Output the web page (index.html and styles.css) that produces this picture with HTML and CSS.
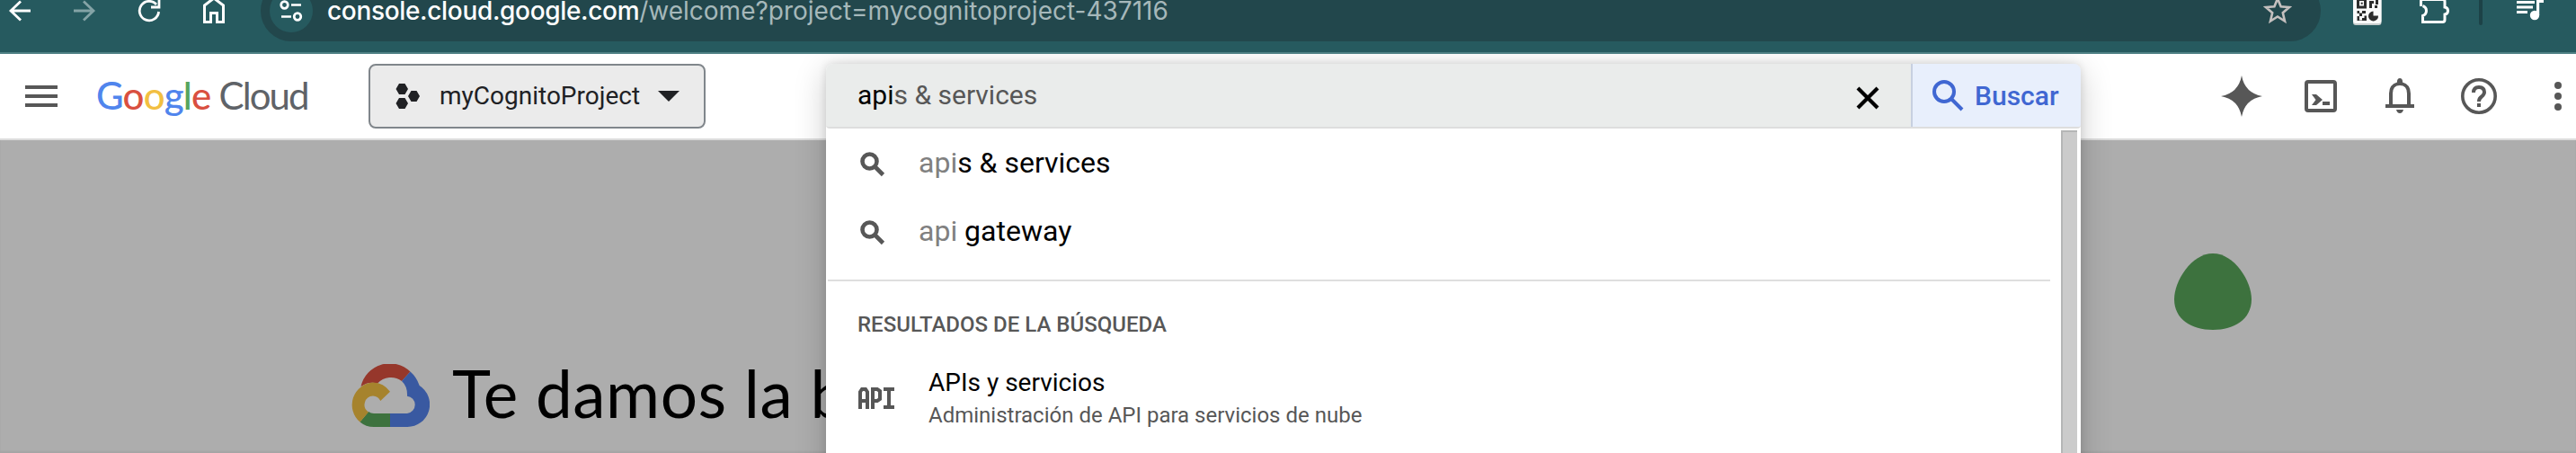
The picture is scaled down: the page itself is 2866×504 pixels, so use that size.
FILE: index.html
```html
<!DOCTYPE html>
<html lang="es">
<head>
<meta charset="utf-8">
<title>Google Cloud</title>
<link rel="stylesheet" href="styles.css">
</head>
<body>
<div class="window">
  <div class="toolbar">
    <svg class="nav" width="290" height="58" viewBox="0 0 290 58" fill="none" stroke="#fff" stroke-width="2.8">
      <path d="M34 12H12M23 1.500L12 12L23 22.500"/>
      <path d="M82 12H104M93 1.500L104 12L93 22.500" stroke="#84a3a6"/>
      <path d="M176.600 13A10.700 10.700 0 1 1 174 5M177 -3V8H168" />
      <path d="M227.500 24.500V6L238 -2L248.500 6V24.500H241.500V14.500H234.500V24.500Z" stroke-width="3"/>
    </svg>
    <div class="omnibox">
      <div class="site-info">
        <svg width="48" height="48" viewBox="0 0 48 48" fill="none" stroke="#fff" stroke-width="2.700"><circle cx="16.500" cy="17.500" r="3.800"/><path d="M24 17.500H35M13 30.500H24"/><circle cx="31" cy="30.500" r="3.800"/></svg>
      </div>
      <div class="url"><span class="host">console.cloud.google.com</span><span class="path">/welcome?project=mycognitoproject-437116</span></div>
      <svg class="star" width="32" height="34" viewBox="0 0 32 34" fill="none" stroke="#c5c0bf" stroke-width="2.600"><path d="M16 3.500L19.600 12.300L29 13L21.800 19.200L24 28.500L16 23.500L8 28.500L10.200 19.200L3 13L12.400 12.300Z"/></svg>
    </div>
    <svg class="tools" width="284" height="58" viewBox="0 0 284 58">
      <rect x="36" y="-8" width="31.500" height="36" rx="3" fill="#c8cdce"/><rect x="36" y="-8" width="31.500" height="34" rx="3" fill="#fafafa"/>
      <g fill="#2c2c2c"><path d="M40 -2H51V9.500H40ZM43 1V6.500H48V1Z" fill-rule="evenodd"/><rect x="44.700" y="2.700" width="2" height="2"/><path d="M54 1H59V4H57V9H54ZM61 0H64V5H61ZM60 6H63V9H60ZM40.500 12H43V15H40.500ZM43 14.500H46V18H43ZM46 12H50V15H46ZM40.500 18H43V22.500H46V20H48.500V17.500H51V23H40.500Z"/><path d="M58.500 12.500V17.500H64A5.500 5.500 0 1 1 58.500 12.500Z"/></g>
      <path d="M111.500 7V1Q111.500 -0.500 113.500 -0.500H136Q138 -0.500 138 1.500V8Q141.500 8.500 141.500 12Q141.500 15.500 138 16V22Q138 24.500 135.500 24.500H113.500V24.500V17.500Q117.500 16 117.500 12Q117.500 8 113.500 6.500" fill="none" stroke="#fff" stroke-width="3" transform="translate(0 0)"/>
      <rect x="158" y="-6" width="4" height="34" rx="2" fill="#1d4247" transform="translate(18 0)"/>
      <g fill="#fff"><path d="M218 1H238V4H218ZM218 6.500H236V9.500H218ZM218 12H230V15H218Z"/><circle cx="238" cy="17" r="5.200"/><path d="M240 -4H248V3H243.200V17H240Z"/></g>
    </svg>
  </div>

  <header class="header">
    <div class="menu"><i></i><i></i><i></i></div>
    <div class="brand"><span class="b">G</span><span class="r">o</span><span class="y">o</span><span class="b">g</span><span class="g">l</span><span class="r">e</span><span class="cloud">Cloud</span></div>
    <div class="picker">
      <svg width="28" height="30" viewBox="0 0 28 30" fill="#202124"><path d="M4 1H10.500L14 7L10.500 13H4L.500 7ZM4 17H10.500L14 23L10.500 29H4L.500 23ZM17.500 9H23.500L27 15L23.500 21H17.500L14 15Z"/></svg>
      <span class="picker-name">myCognitoProject</span>
      <svg width="24" height="12" viewBox="0 0 24 12"><path d="M0 0H24L12 12Z" fill="#202124"/></svg>
    </div>
    <div class="actions">
      <svg width="46" height="46" viewBox="0 0 46 46" fill="#575757"><path d="M23 0Q26.500 19.500 46 23Q26.500 26.500 23 46Q19.500 26.500 0 23Q19.500 19.500 23 0Z"/></svg>
      <svg width="36" height="36" viewBox="0 0 36 36"><rect x="2" y="2" width="32" height="32" rx="2" fill="none" stroke="#575757" stroke-width="4"/><path d="M8 16H13L20 22L13 28H8L12.500 22ZM20 24H28V28H20Z" fill="#575757"/></svg>
      <svg width="32" height="40" viewBox="0 0 32 40" fill="#575757"><path d="M0 29H4V17Q4 7 13 4.500V3Q13.500 0 16 0Q18.500 0 19 3V4.500Q28 7 28 17V29H32V33H0ZM8 29H24V17Q24 8 16 8Q8 8 8 17Z" fill-rule="evenodd"/><path d="M12 35H20Q19 39 16 39Q13 39 12 35Z"/></svg>
      <svg width="40" height="40" viewBox="0 0 40 40"><circle cx="20" cy="20" r="18.200" fill="none" stroke="#575757" stroke-width="3.600"/><path d="M14 16Q14 10 20 10Q26 10 26 15.500Q26 18 23 20.500Q20 22.500 20 26" fill="none" stroke="#575757" stroke-width="4"/><rect x="18" y="28" width="4" height="4" fill="#575757"/></svg>
      <svg width="8" height="32" viewBox="0 0 8 32" fill="#575757"><circle cx="4" cy="4" r="4"/><circle cx="4" cy="16" r="4"/><circle cx="4" cy="28" r="4"/></svg>
    </div>
  </header>

  <main class="page">
    <div class="welcome">
      <svg width="88" height="70" viewBox="0 0 88 70">
        <path d="M11.500 25A33 33 0 0 1 66.500 8.500L57 19A20 20 0 0 0 30 21.500Q20 19 11.500 25Z" fill="#96372b"/>
        <path d="M66.500 8.500Q73.500 14.500 76.700 24A25 25 0 0 1 63 70H44V55H63A9.700 9.700 0 0 0 63 35.700Q63.500 25 57 19Z" fill="#3959a1"/>
        <path d="M44 55H26Q22.500 55 20 53L10.500 64.500Q17 70 26 70H44Z" fill="#3d723e"/>
        <path d="M10.500 64.500A25 25 0 0 1 25 20.500A25 25 0 0 1 44 30.700L33.300 41A10 10 0 0 0 25 35.500A9.800 9.800 0 0 0 20 53.500Z" fill="#a6832d"/>
      </svg>
      <h1>Te damos la b</h1>
    </div>
    <svg class="blob" width="86" height="85" viewBox="0 0 86 85"><path d="M43 0C67 0 86 31 86 51C86 73 67 85 43 85C19 85 0 73 0 51C0 31 19 0 43 0Z" fill="#3d723e"/></svg>
  </main>

  <section class="search">
    <div class="field">
      <div class="query"><b>api</b>s &amp; services</div>
      <svg class="clear" width="26" height="26" viewBox="0 0 26 26"><path d="M2 2L24 24M24 2L2 24" stroke="#000" stroke-width="4.200"/></svg>
      <div class="go">
        <svg width="35" height="35" viewBox="0 0 35 35" fill="none" stroke="#4067d2" stroke-width="4"><circle cx="13" cy="13" r="11"/><path d="M20.500 20.500L33 33"/></svg>
        <span>Buscar</span>
      </div>
    </div>
    <div class="results">
      <div class="list">
        <div class="hint"><svg width="28" height="28" viewBox="0 0 28 28" fill="none" stroke="#575757" stroke-width="4.600"><circle cx="10.500" cy="10.500" r="8"/><path d="M16 16L25.500 25.500"/></svg><span><em>api</em>s &amp; services</span></div>
        <div class="hint"><svg width="28" height="28" viewBox="0 0 28 28" fill="none" stroke="#575757" stroke-width="4.600"><circle cx="10.500" cy="10.500" r="8"/><path d="M16 16L25.500 25.500"/></svg><span><em>api</em> gateway</span></div>
        <div class="group">
          <div class="group-title">RESULTADOS DE LA BÚSQUEDA</div>
          <div class="item">
            <svg width="42" height="24" viewBox="0 0 42 24" fill="none" stroke="#575757" stroke-width="4"><path d="M3 24V5L5 2H9L11 5V24M3 15H11M17 24V2H22L25 4V13L22 15H17M29 2H41M35 2V22M29 22H41"/></svg>
            <div><div class="item-title">APIs y servicios</div><div class="item-sub">Administración de API para servicios de nube</div></div>
          </div>
        </div>
      </div>
      <div class="scroll"></div>
    </div>
  </section>
</div>
</body>
</html>
```
FILE: styles.css
```css
* { box-sizing: border-box; }
body { margin: 0; font-family: Roboto, sans-serif; }
svg { display: block; flex: none; }
.window { position: relative; width: 2866px; height: 504px; overflow: hidden; display: flex; flex-direction: column; background: #fff; }
.toolbar { height: 60px; flex: none; display: flex; background: #265a5f; border-bottom: 2px solid #4e8084; overflow: hidden; }
.omnibox { width: 2292px; height: 68px; margin-top: -22px; padding: 0 32px 0 10px; border-radius: 34px; background: #22474c; display: flex; align-items: center; }
.site-info { width: 48px; height: 48px; border-radius: 50%; background: #265a5f; }
.url { margin-left: 16px; flex: 1; font: 500 28px/34px Inter, sans-serif; white-space: nowrap; }
.host { color: #fff; letter-spacing: -.33px; }
.path { color: #a6b8ba; font-weight: 400; }
.header { height: 96px; flex: none; display: flex; align-items: center; border-bottom: 2px solid #dcdcdc; }
.menu { width: 36px; margin-left: 28px; display: flex; flex-direction: column; gap: 6px; }
.menu i { height: 4px; background: #575757; }
.brand { width: 302px; padding: 0 0 3px 43px; font: 500 42px/48px Lato, sans-serif; letter-spacing: -.8px; white-space: nowrap; }
.brand .b { color: #5085ed; }
.brand .r { color: #d95040; }
.brand .y { color: #f2bf42; }
.brand .g { color: #58a55c; }
.brand .cloud { margin-left: 9px; color: #5f6368; font-weight: 400; letter-spacing: -1.9px; }
.picker { width: 375px; height: 72px; margin-left: 44px; padding-left: 28px; display: flex; align-items: center; border: 2px solid #80868b; border-radius: 8px; background: #ebebeb; }
.picker-name { width: 223px; margin: 0 20px 0 21px; padding-bottom: 2px; font-size: 28px; color: #202124; white-space: nowrap; }
.actions { margin-left: auto; margin-right: 16px; display: flex; align-items: center; }
.actions svg:nth-child(2) { margin-left: 47px; }
.actions svg:nth-child(3) { margin-left: 54px; }
.actions svg:nth-child(4) { margin-left: 52px; }
.actions svg:nth-child(5) { margin-left: 64px; }
.page { flex: 1; display: flex; align-items: flex-start; background: #adadad; box-shadow: inset 0 -2px 2px #a5a5a5; }
.welcome { display: flex; margin: 249px 0 0 390px; width: 2029px; }
.welcome h1 { margin: -7px 0 0 25px; font: 400 73px/78px Lato, sans-serif; letter-spacing: .5px; color: #000; white-space: nowrap; }
.blob { margin-top: 126px; }
.search { position: absolute; left: 919px; top: 71px; width: 1396px; height: 460px; border-radius: 8px 8px 0 0; background: #fff; box-shadow: 0 8px 36px rgba(0,0,0,.2), 0 0 10px rgba(0,0,0,.12); clip-path: inset(-11px -60px 0 -60px); }
.field { height: 72px; display: flex; align-items: center; background: #eaeceb; border-bottom: 2px solid #dedede; border-radius: 8px 8px 4px 4px; overflow: hidden; }
.query { padding: 0 0 1px 35px; flex: 1; font-size: 30px; color: #575757; }
.query b { font-weight: 400; color: #000; }
.clear { margin: 6px 35px 0 0; }
.go { width: 189px; height: 70px; padding-left: 22px; display: flex; align-items: center; gap: 12px; border-left: 2px solid #c7d0e0; background: #e8effc; color: #4067d2; font-size: 30px; font-weight: 500; }
.results { height: 388px; display: flex; }
.list { flex: 1; padding-left: 2px; }
.hint { height: 76px; padding-left: 36px; display: flex; align-items: center; gap: 37px; font-size: 32px; }
.hint svg { margin-top: 4px; }
.hint em { font-style: normal; color: #808080; }
.group { margin-right: 12px; margin-top: 16px; border-top: 2px solid #dedede; padding: 34px 0 0 33px; color: #575757; }
.group-title { font-size: 24px; line-height: 28px; font-weight: 500; }
.item { display: flex; margin-top: 32px; gap: 37px; align-items: center; }
.item-title { font-size: 28px; line-height: 38px; color: #000; }
.item-sub { font-size: 24px; line-height: 34px; }
.scroll { width: 18px; margin: 2px 4px 0 0; border: solid #b5b6b6; border-width: 2px 0 0 2px; background: #cbcbcb; }
```
